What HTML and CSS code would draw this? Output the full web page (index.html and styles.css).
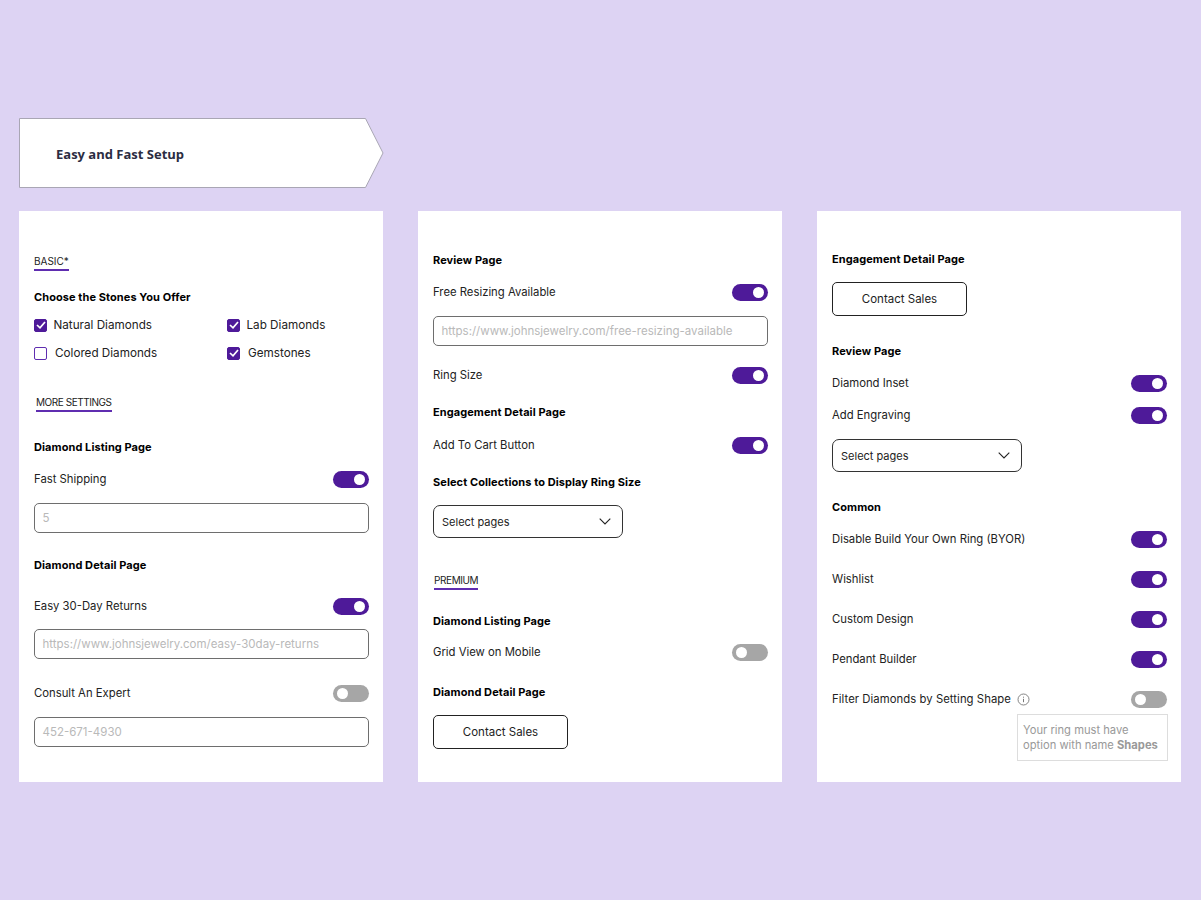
FILE: index.html
```html
<!DOCTYPE html>
<html>
  <head>
    <meta charset="UTF-8">
    <meta name="viewport" content="width=device-width, initial-scale=1.0">
    <title>Easy and Fast Setup</title>
    <link rel="stylesheet" href="styles.css">
  </head>
  <body>
    <div class="banner">
      <svg class="bannerShape" width="366" height="72" viewBox="0 0 366 72">
        <polygon points="0.5,0.5 346.5,0.5 364,35 346.5,69.5 0.5,69.5" fill="#fff" stroke="#a9a6b4" stroke-width="1"/>
      </svg>
      <h1>Easy and Fast Setup</h1>
    </div>

    <div class="cards">
      <!-- left card -->
      <div class="card">
        <div class="tag mt-43">BASIC*</div>
        <div class="title mt-18">Choose the Stones You Offer</div>
        <div class="checks mt-12">
          <label class="check"><span class="box on"><svg width="10" height="8" viewBox="0 0 10 8"><path d="M1 4l3 2.8L9 1" fill="none" stroke="#fff" stroke-width="1.7"/></svg></span>Natural Diamonds</label>
          <label class="check"><span class="box on"><svg width="10" height="8" viewBox="0 0 10 8"><path d="M1 4l3 2.8L9 1" fill="none" stroke="#fff" stroke-width="1.7"/></svg></span>Lab Diamonds</label>
          <label class="check wide"><span class="box"></span>Colored Diamonds</label>
          <label class="check wide"><span class="box on"><svg width="10" height="8" viewBox="0 0 10 8"><path d="M1 4l3 2.8L9 1" fill="none" stroke="#fff" stroke-width="1.7"/></svg></span>Gemstones</label>
        </div>
        <div class="tag tagMore mt-34">MORE SETTINGS</div>
        <div class="title mt-27">Diamond Listing Page</div>
        <div class="row mt-15"><span>Fast Shipping</span><span class="toggle on"></span></div>
        <div class="field mt-15">5</div>
        <div class="title mt-24">Diamond Detail Page</div>
        <div class="row mt-24"><span>Easy 30-Day Returns</span><span class="toggle on"></span></div>
        <div class="field mt-14">https://www.johnsjewelry.com/easy-30day-returns</div>
        <div class="row mt-25"><span>Consult An Expert</span><span class="toggle"></span></div>
        <div class="field mt-15">452-671-4930</div>
      </div>

      <!-- middle card -->
      <div class="card">
        <div class="title mt-41">Review Page</div>
        <div class="row mt-15"><span>Free Resizing Available</span><span class="toggle on"></span></div>
        <div class="field mt-15">https://www.johnsjewelry.com/free-resizing-available</div>
        <div class="row mt-20"><span>Ring Size</span><span class="toggle on"></span></div>
        <div class="title mt-20">Engagement Detail Page</div>
        <div class="row mt-16"><span>Add To Cart Button</span><span class="toggle on"></span></div>
        <div class="title mt-20">Select Collections to Display Ring Size</div>
        <div class="select mt-15">Select pages<svg width="12" height="7" viewBox="0 0 12 7"><path d="M.7.7L6 6l5.3-5.3" fill="none" stroke="#222" stroke-width="1.1"/></svg></div>
        <div class="tag tagPremium mt-35">PREMIUM</div>
        <div class="title mt-23">Diamond Listing Page</div>
        <div class="row mt-14"><span>Grid View on Mobile</span><span class="toggle"></span></div>
        <div class="title mt-23">Diamond Detail Page</div>
        <a href="javascript:;" class="btn mt-15">Contact Sales</a>
      </div>

      <!-- right card -->
      <div class="card">
        <div class="title mt-40">Engagement Detail Page</div>
        <a href="javascript:;" class="btn mt-15">Contact Sales</a>
        <div class="title mt-27">Review Page</div>
        <div class="row mt-15"><span>Diamond Inset</span><span class="toggle on"></span></div>
        <div class="row mt-14"><span>Add Engraving</span><span class="toggle on"></span></div>
        <div class="select mt-15">Select pages<svg width="12" height="7" viewBox="0 0 12 7"><path d="M.7.7L6 6l5.3-5.3" fill="none" stroke="#222" stroke-width="1.1"/></svg></div>
        <div class="title mt-27">Common</div>
        <div class="row mt-15"><span>Disable Build Your Own Ring (BYOR)</span><span class="toggle on"></span></div>
        <div class="row mt-22"><span>Wishlist</span><span class="toggle on"></span></div>
        <div class="row mt-22"><span>Custom Design</span><span class="toggle on"></span></div>
        <div class="row mt-22"><span>Pendant Builder</span><span class="toggle on"></span></div>
        <div class="row mt-22">
          <span class="withInfo">Filter Diamonds by Setting Shape
            <svg width="13" height="13" viewBox="0 0 13 13"><circle cx="6.5" cy="6.5" r="5.5" fill="none" stroke="#777" stroke-width=".9"/><path d="M6.5 5.8v3.4M6.5 3.7v1" stroke="#777" stroke-width="1"/></svg>
          </span>
          <span class="toggle"></span>
        </div>
        <div class="note">Your ring must have<br>option with name <b>Shapes</b></div>
      </div>
    </div>
  </body>
</html>
```

FILE: styles.css
```css
* {
  margin: 0;
  padding: 0;
  box-sizing: border-box;
}

body {
  background-color: #ddd3f3;
  padding: 118px 19px 0 19px;
  font-family: "Inter", "Liberation Sans", sans-serif;
  font-size: 11.3px;
  color: #222;
}

a {
  text-decoration: none;
  color: inherit;
}

.banner {
  position: relative;
  width: 366px;
  height: 70px;
  padding: 1px 0 0 37px;
  display: flex;
  align-items: center;
}
.bannerShape {
  position: absolute;
  left: 0;
  top: 0;
}
.banner h1 {
  position: relative;
  font-family: "Open Sans", sans-serif;
  font-size: 13px;
  font-weight: 700;
  color: #2b2d42;
}

.cards {
  display: flex;
  gap: 35px;
  margin-top: 23px;
}
.card {
  width: 364px;
  height: 571px;
  background-color: #fff;
  padding: 0 14px 0 15px;
  display: flex;
  flex-direction: column;
  align-items: flex-start;
}

.tag {
  height: 17px;
  font-size: 10px;
  line-height: 14px;
  color: #222;
  border-bottom: 2px solid #5f2db0;
}
.tagMore {
  margin-left: 2px;
  letter-spacing: -0.45px;
}
.tagPremium {
  margin-left: 1px;
  letter-spacing: -0.4px;
}

.title {
  height: 16px;
  line-height: 16px;
  font-size: 11px;
  font-weight: 700;
  letter-spacing: 0.08px;
  color: #000;
}

.checks {
  display: grid;
  grid-template-columns: 193px auto;
  row-gap: 12px;
  font-size: 11.7px;
}
.check {
  display: flex;
  align-items: center;
  height: 16px;
  gap: 6.5px;
}
.check.wide {
  gap: 8px;
}
.box {
  width: 13px;
  height: 13px;
  border: 1px solid #5f2db0;
  border-radius: 2px;
  display: flex;
  align-items: center;
  justify-content: center;
}
.box.on {
  background-color: #4e1a99;
  border-color: #4e1a99;
}

.row {
  width: 100%;
  height: 18px;
  display: flex;
  align-items: center;
  justify-content: space-between;
}
.withInfo {
  display: flex;
  align-items: center;
  gap: 6px;
  letter-spacing: 0.06px;
}
.toggle {
  position: relative;
  width: 36px;
  height: 17px;
  border-radius: 9px;
  background-color: #a6a6a6;
}
.toggle::after {
  content: "";
  position: absolute;
  left: 4px;
  top: 3px;
  width: 11px;
  height: 11px;
  border-radius: 50%;
  background-color: #fff;
}
.toggle.on {
  background-color: #4e1a99;
}
.toggle.on::after {
  left: 21px;
}

.field {
  width: 100%;
  height: 30px;
  padding-left: 7.5px;
  font-size: 11.5px;
  line-height: 29px;
  border: 1px solid #6e6e6e;
  border-radius: 5px;
  color: #b9b9b9;
  white-space: nowrap;
}

.select {
  width: 190px;
  height: 33px;
  padding: 0 11px 0 8px;
  border: 1px solid #333;
  border-radius: 7px;
  font-size: 11px;
  display: flex;
  align-items: center;
  justify-content: space-between;
}

.btn {
  width: 135px;
  height: 34px;
  border: 1px solid #222;
  border-radius: 5px;
  font-size: 11.5px;
  display: flex;
  align-items: center;
  justify-content: center;
}

.note {
  align-self: flex-end;
  width: 151px;
  height: 47px;
  margin-top: 6px;
  margin-right: -1px;
  padding: 8px 5px 0 5px;
  border: 1px solid #ddd;
  font-size: 11.2px;
  line-height: 15px;
  color: #999;
  white-space: nowrap;
}

.mt-12 { margin-top: 12px; }
.mt-14 { margin-top: 14px; }
.mt-15 { margin-top: 15px; }
.mt-16 { margin-top: 16px; }
.mt-18 { margin-top: 18px; }
.mt-20 { margin-top: 20px; }
.mt-22 { margin-top: 22px; }
.mt-23 { margin-top: 23px; }
.mt-24 { margin-top: 24px; }
.mt-25 { margin-top: 25px; }
.mt-27 { margin-top: 27px; }
.mt-34 { margin-top: 34px; }
.mt-35 { margin-top: 35px; }
.mt-40 { margin-top: 40px; }
.mt-41 { margin-top: 41px; }
.mt-43 { margin-top: 43px; }
```
